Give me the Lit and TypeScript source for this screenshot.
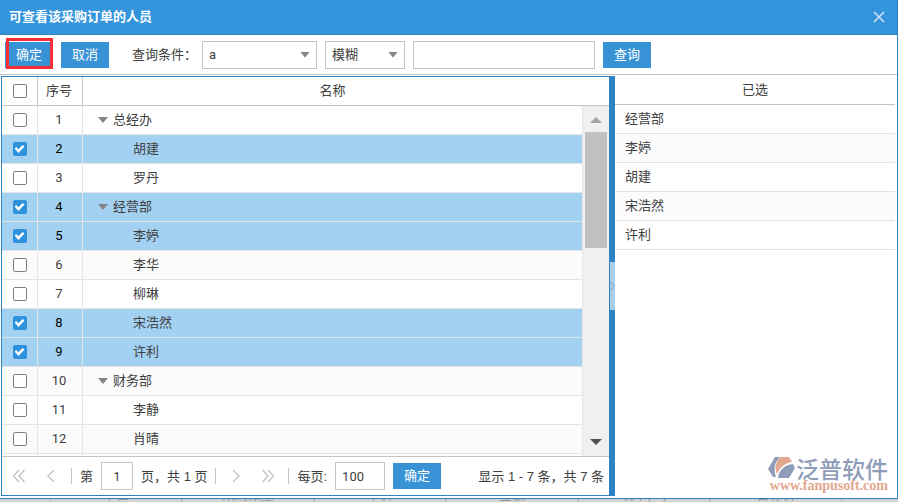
import { LitElement, html, css, svg } from "lit";
import { customElement, state } from "lit/decorators.js";
import { classMap } from "lit/directives/class-map.js";

interface Row {
  name: string;
  group?: boolean;
  checked?: boolean;
}

const ROWS: Row[] = [
  { name: "总经办", group: true },
  { name: "胡建", checked: true },
  { name: "罗丹" },
  { name: "经营部", group: true, checked: true },
  { name: "李婷", checked: true },
  { name: "李华" },
  { name: "柳琳" },
  { name: "宋浩然", checked: true },
  { name: "许利", checked: true },
  { name: "财务部", group: true },
  { name: "李静" },
  { name: "肖晴" },
];

const CHOSEN = ["经营部", "李婷", "胡建", "宋浩然", "许利"];
const BACK_COLUMNS = ["单位", "采购数量", "单价", "金额", "税率(%)", "目标价"];

const chevron = (d: string) => html`<svg width="14" height="14" viewBox="0 0 14 14" aria-hidden="true">
  ${svg`<path d=${d} fill="none" stroke="#c4c4c4" stroke-width="1.4" />`}
</svg>`;

@customElement("app-root")
export class AppRoot extends LitElement {
  @state() private rows: Row[] = ROWS;

  static styles = css`
    :host {
      display: flex;
      flex-direction: column;
      height: 100vh;
      overflow: hidden;
      background: #d3d3d3;
      color: #404040;
      font: 13px/18px "Liberation Sans", "Noto Sans CJK SC", sans-serif;
    }
    * { box-sizing: border-box; }
    button, input, select {
      font: inherit;
      color: inherit;
      margin: 0;
      border-radius: 0;
    }
    .dialog {
      position: relative;
      flex: 1;
      min-height: 0;
      display: flex;
      flex-direction: column;
      background: #fff;
      border: solid #2d83c4;
      border-width: 0 1px 1px 0;
    }
    .title {
      display: flex;
      align-items: center;
      justify-content: space-between;
      height: 35px;
      padding: 0 11px 0 9px;
      background: #3595dc;
      border-bottom: 1px solid #2d83c4;
      color: #fff;
    }
    .title h1 { margin: 0; font-size: 13px; line-height: 18px; font-weight: bold; }
    .close {
      display: flex;
      padding: 0;
      border: 0;
      background: none;
    }
    .toolbar {
      display: flex;
      align-items: center;
      gap: 8px;
      height: 40px;
      padding: 0 5px;
      border-bottom: 1px solid #c4c4c4;
    }
    .btn {
      width: 48px;
      height: 26px;
      padding: 0;
      border: 0;
      background: #3892d6;
      color: #fff;
    }
    .marked { position: relative; display: flex; }
    .marked::after {
      content: "";
      position: absolute;
      inset: -4px 0 -1px 1px;
      border: 3px solid #fa2f36;
      pointer-events: none;
    }
    .condition {
      display: flex;
      align-items: center;
      gap: 5px;
      margin-left: 15px;
    }
    .pick { display: grid; align-items: center; width: 115px; }
    .pick.short { width: 80px; }
    .pick select {
      grid-area: 1 / 1;
      width: 100%;
      height: 28px;
      padding: 0 20px 0 6px;
      border: 1px solid #c4c4c4;
      background: #fff;
      appearance: none;
    }
    .arrow {
      width: 10px;
      height: 6px;
      background: #858585;
      clip-path: polygon(0 0, 100% 0, 50% 100%);
    }
    .pick .arrow {
      grid-area: 1 / 1;
      justify-self: end;
      margin-right: 7px;
      pointer-events: none;
    }
    .pick select, .field, td.num { font-family: Roboto, "Noto Sans CJK SC", sans-serif; }
    .field {
      height: 28px;
      padding: 0 6px;
      border: 1px solid #c4c4c4;
      background: #fff;
    }
    .query { width: 182px; }
    .body {
      flex: 1;
      min-height: 0;
      display: grid;
      grid-template-columns: 608fr 6px 280fr;
      padding: 0 2px 0 1px;
    }
    .people {
      display: flex;
      flex-direction: column;
      min-height: 0;
      margin: 1px 0 2px;
      border: 1px solid #2d83c4;
      border-right: 0;
    }
    .grid { flex: 1; min-height: 0; display: flex; overflow: hidden; }
    .rows { flex: 1; overflow: hidden; }
    table {
      width: 100%;
      table-layout: fixed;
      border-collapse: separate;
      border-spacing: 0;
    }
    th, td { height: 29px; padding: 0; text-align: center; }
    th {
      font-weight: normal;
      border-bottom: 1px solid #c4c4c4;
      border-right: 1px solid #c4c4c4;
    }
    td {
      border-bottom: 1px solid #e4e4e4;
      border-right: 1px solid #e4e4e4;
    }
    th:last-child, td:last-child { border-right: 0; }
    tbody tr:nth-child(even) { background: #fbfbfb; }
    tbody tr.on { background: #a3d1f2; }
    .tick { width: 36px; }
    .num { width: 45px; padding-right: 2px; }
    .on .num { color: #000; }
    .name { text-align: left; padding-left: 50px; }
    .group { display: flex; align-items: center; gap: 5px; margin-left: -35px; }
    .check {
      display: grid;
      place-items: center;
      appearance: none;
      width: 14px;
      height: 14px;
      margin: 0 auto;
      border: 1px solid #808080;
      border-radius: 2px;
      background: #fff;
    }
    .check:checked { background: #2f92dc; border-color: #2f92dc; }
    .check:checked::after {
      content: "";
      width: 10px;
      height: 8px;
      background: #fff;
      clip-path: polygon(0 45%, 18% 25%, 38% 52%, 82% 0, 100% 18%, 40% 100%);
    }
    .scroll { width: 27px; display: flex; flex-direction: column; }
    .scroll-head { height: 29px; border-bottom: 1px solid #c4c4c4; }
    .track {
      flex: 1;
      display: flex;
      flex-direction: column;
      align-items: center;
      padding: 11px 0 11px;
      gap: 9px;
      background: #f0f0f0;
      border-left: 1px solid #e4e4e4;
    }
    .thumb-area { flex: 1; width: 22px; }
    .thumb { height: 39%; background: #c1c1c1; }
    .step { width: 12px; height: 6px; clip-path: polygon(0 0, 100% 0, 50% 100%); background: #505050; }
    .step.up { clip-path: polygon(0 100%, 100% 100%, 50% 0); background: #a3a3a3; }
    .pager {
      display: flex;
      align-items: center;
      gap: 8px;
      height: 39px;
      padding: 0 5px;
      border-top: 1px solid #c4c4c4;
      white-space: nowrap;
    }
    .caption { padding-top: 2px; }
    .nav {
      display: flex;
      align-items: center;
      justify-content: center;
      width: 24px;
      height: 24px;
      padding: 0;
      border: 0;
      background: none;
    }
    .sep { width: 1px; height: 16px; background: #c4c4c4; }
    .page { width: 32px; text-align: center; }
    .size { width: 50px; }
    .total { margin-left: auto; }
    .splitter {
      display: flex;
      align-items: center;
      justify-content: flex-end;
      margin: 1px 0 2px;
      background: #2d83c4;
    }
    .handle {
      display: flex;
      align-items: center;
      width: 5px;
      height: 48px;
      padding: 0;
      border: 0;
      background: #abcde7;
    }
    .chosen th { height: 30px; border-right: 0; }
    .chosen td { text-align: left; padding-left: 10px; }
    .brand {
      position: absolute;
      right: 9px;
      bottom: 6px;
      display: grid;
      color: #8e9cb9;
    }
    .brand-name {
      display: flex;
      align-items: center;
      height: 24px;
      font: 500 23px/24px "Noto Sans CJK SC", sans-serif;
    }
    .brand-url {
      color: #e2a78e;
      font: bold 14px/12px "Liberation Serif", serif;
      text-align: right;
      text-decoration: none;
    }
    .behind {
      display: flex;
      align-items: flex-end;
      height: 3px;
      padding-left: 51px;
      overflow: hidden;
      color: #999;
      line-height: 14px;
    }
    .behind span {
      flex: 0 0 132px;
      text-align: center;
      border: solid #bbb;
      border-width: 0 1px;
      margin-left: -1px;
      margin-right: 1px;
    }
  `;

  private toggle(index: number) {
    this.rows = this.rows.map((r, i) => (i === index ? { ...r, checked: !r.checked } : r));
  }

  private row(r: Row, i: number) {
    return html`<tr class=${classMap({ on: !!r.checked })}>
      <td class="tick">
        <input class="check" type="checkbox" aria-label=${`选择 ${r.name}`} .checked=${!!r.checked} @change=${() => this.toggle(i)} />
      </td>
      <td class="num">${i + 1}</td>
      <td class="name">
        ${r.group ? html`<div class="group"><span class="arrow"></span>${r.name}</div>` : r.name}
      </td>
    </tr>`;
  }

  render() {
    return html`
      <section class="dialog" role="dialog" aria-labelledby="title">
        <header class="title">
          <h1 id="title">可查看该采购订单的人员</h1>
          <button class="close" aria-label="关闭">
            <svg width="14" height="14" viewBox="0 0 14 14"><path d="M2 2 L12 12 M12 2 L2 12" stroke="#cfe4f5" stroke-width="1.5" /></svg>
          </button>
        </header>

        <div class="toolbar">
          <div class="marked"><button class="btn">确定</button></div>
          <button class="btn">取消</button>
          <div class="condition">
            <label for="column">查询条件：</label>
            <div class="pick">
              <select id="column"><option>a</option></select>
              <span class="arrow"></span>
            </div>
          </div>
          <div class="pick short">
            <select aria-label="匹配方式"><option>模糊</option></select>
            <span class="arrow"></span>
          </div>
          <input class="field query" type="text" aria-label="查询内容" />
          <button class="btn">查询</button>
        </div>

        <div class="body">
          <div class="people">
            <div class="grid">
              <div class="rows">
                <table>
                  <thead>
                    <tr>
                      <th class="tick"><input class="check" type="checkbox" aria-label="全选" /></th>
                      <th class="num">序号</th>
                      <th>名称</th>
                    </tr>
                  </thead>
                  <tbody>
                    ${this.rows.map((r, i) => this.row(r, i))}
                    <tr><td></td><td></td><td></td></tr>
                  </tbody>
                </table>
              </div>
              <div class="scroll" aria-hidden="true">
                <div class="scroll-head"></div>
                <div class="track">
                  <div class="step up"></div>
                  <div class="thumb-area"><div class="thumb"></div></div>
                  <div class="step"></div>
                </div>
              </div>
            </div>
            <div class="pager">
              <button class="nav" aria-label="首页">${chevron("M7 1 L1.5 7 L7 13 M12.5 1 L7 7 L12.5 13")}</button>
              <button class="nav" aria-label="上一页">${chevron("M10 1 L4 7 L10 13")}</button>
              <span class="sep"></span>
              <label class="caption" for="page">第</label>
              <input class="field page" id="page" type="text" value="1" />
              <span class="caption">页，共 1 页</span>
              <span class="sep"></span>
              <button class="nav" aria-label="下一页">${chevron("M4 1 L10 7 L4 13")}</button>
              <button class="nav" aria-label="末页">${chevron("M1.5 1 L7 7 L1.5 13 M7 1 L12.5 7 L7 13")}</button>
              <span class="sep"></span>
              <label class="caption" for="size">每页:</label>
              <input class="field size" id="size" type="text" value="100" />
              <button class="btn">确定</button>
              <span class="caption total">显示 1 - 7 条，共 7 条</span>
            </div>
          </div>

          <div class="splitter">
            <button class="handle" aria-label="折叠">
              <svg width="5" height="10" viewBox="0 0 5 10"><path d="M0 0.5 L4.5 5 L0 9.5" fill="none" stroke="#6f9fc4" /></svg>
            </button>
          </div>

          <div class="chosen">
            <table>
              <thead><tr><th>已选</th></tr></thead>
              <tbody>${CHOSEN.map((n) => html`<tr><td>${n}</td></tr>`)}</tbody>
            </table>
          </div>
        </div>

        <div class="brand">
          <div class="brand-name">
            <svg width="28" height="24" viewBox="0 0 28 24" aria-hidden="true">
              <path d="M7 1 H12 C7 6 5 12 8 21 H5 L0 13 Z" fill="#8e9cb9" />
              <path d="M13 1 H21 L24 6 C17 7 12 11 9 18 C6 11 8 5 13 1 Z" fill="#e2a78e" />
              <path d="M25 8 L27 12 L21 22 H10 C11 14 16 9 25 8 Z" fill="#8e9cb9" />
            </svg>
            <span>泛普软件</span>
          </div>
          <a class="brand-url" href="#">www.fanpusoft.com</a>
        </div>
      </section>
      <div class="behind" aria-hidden="true">${BACK_COLUMNS.map((c) => html`<span>${c}</span>`)}</div>
    `;
  }
}
